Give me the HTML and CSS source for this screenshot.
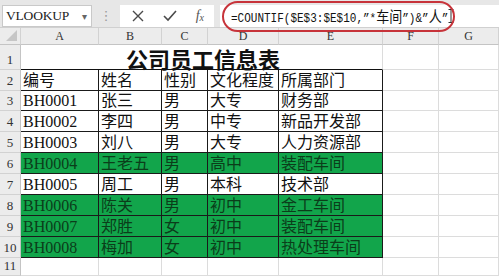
FILE: index.html
```html
<!DOCTYPE html>
<html lang="zh">
<head>
<meta charset="utf-8">
<link rel="stylesheet" href="styles.css">
</head>
<body>
<div class="app">
  <div class="fbar">
    <div class="namebox"><span class="name">VLOOKUP</span><span class="dd">▾</span></div>
    <div class="grip">⋮</div>
    <div class="btns">
      <svg class="ic" width="12" height="12" viewBox="0 0 12 12"><path d="M1 1 L11 11 M11 1 L1 11" stroke="#4a4a4a" stroke-width="1.4" fill="none"/></svg>
      <svg class="ic" width="14" height="12" viewBox="0 0 14 12"><path d="M1 6 L5 10 L13 1" stroke="#4a4a4a" stroke-width="1.6" fill="none"/></svg>
      <span class="fx">f<sub>x</sub></span>
    </div>
    <div class="formula"><span class="ftext">=COUNTIF($E$3:$E$10,”*<span class="cj">车间</span>”)&amp;”<span class="cj">人</span>”</span><svg class="ibeam" width="6" height="14" viewBox="0 0 6 14"><path d="M0.5 0.5 H5.5 M3 0.5 V13.5 M0.5 13.5 H5.5" stroke="#333" stroke-width="1" fill="none"/></svg></div>
    <div class="oval"></div>
  </div>
  <div class="sheet">
    <div class="ch corner"><span class="tri"></span></div>
    <div class="ch">A</div><div class="ch">B</div><div class="ch">C</div><div class="ch">D</div><div class="ch">E</div><div class="ch">F</div><div class="ch">G</div>

    <div class="rh">1</div>
    <div class="c title"><span>公司员工信息表</span></div>
    <div class="c"></div><div class="c"></div>

    <div class="rh">2</div>
    <div class="c t first">编号</div><div class="c t">姓名</div><div class="c t">性别</div><div class="c t">文化程度</div><div class="c t last">所属部门</div><div class="c"></div><div class="c"></div>

    <div class="rh">3</div>
    <div class="c t first">BH0001</div><div class="c t">张三</div><div class="c t">男</div><div class="c t">大专</div><div class="c t last">财务部</div><div class="c"></div><div class="c"></div>

    <div class="rh">4</div>
    <div class="c t first">BH0002</div><div class="c t">李四</div><div class="c t">男</div><div class="c t">中专</div><div class="c t last">新品开发部</div><div class="c"></div><div class="c"></div>

    <div class="rh">5</div>
    <div class="c t first">BH0003</div><div class="c t">刘八</div><div class="c t">男</div><div class="c t">大专</div><div class="c t last">人力资源部</div><div class="c"></div><div class="c"></div>

    <div class="rh">6</div>
    <div class="c t g first">BH0004</div><div class="c t g">王老五</div><div class="c t g">男</div><div class="c t g">高中</div><div class="c t g last">装配车间</div><div class="c"></div><div class="c"></div>

    <div class="rh">7</div>
    <div class="c t first">BH0005</div><div class="c t">周工</div><div class="c t">男</div><div class="c t">本科</div><div class="c t last">技术部</div><div class="c"></div><div class="c"></div>

    <div class="rh">8</div>
    <div class="c t g first">BH0006</div><div class="c t g">陈关</div><div class="c t g">男</div><div class="c t g">初中</div><div class="c t g last">金工车间</div><div class="c"></div><div class="c"></div>

    <div class="rh">9</div>
    <div class="c t g first">BH0007</div><div class="c t g">郑胜</div><div class="c t g">女</div><div class="c t g">初中</div><div class="c t g last">装配车间</div><div class="c"></div><div class="c"></div>

    <div class="rh">10</div>
    <div class="c t g first">BH0008</div><div class="c t g">梅加</div><div class="c t g">女</div><div class="c t g">初中</div><div class="c t g last">热处理车间</div><div class="c"></div><div class="c"></div>

    <div class="rh">11</div>
    <div class="c"></div><div class="c"></div><div class="c"></div><div class="c"></div><div class="c"></div><div class="c"></div><div class="c"></div>
  </div>
</div>
</body>
</html>
```
FILE: styles.css
```css
* { box-sizing: border-box; }
html, body { margin: 0; padding: 0; }
body { width: 499px; height: 276px; overflow: hidden; background: #fff; }
.app { width: 499px; height: 276px; display: flex; flex-direction: column; }

.fbar {
  position: relative;
  height: 33px;
  background: #e7e7e7;
  display: flex;
  align-items: flex-start;
  padding-top: 5px;
  border-bottom: 1px solid #d0d0d0;
}
.namebox {
  margin-left: 2px;
  width: 90px; height: 22px;
  background: #fff;
  border: 1px solid #c9c9c9;
  display: flex; align-items: center; justify-content: space-between;
  padding: 0 4px 0 3px;
}
.name { font-family: "Liberation Serif", serif; font-size: 13.5px; color: #222; letter-spacing: -0.2px; }
.dd { font-family: "DejaVu Sans", sans-serif; font-size: 10px; color: #666; }
.grip { width: 28px; text-align: center; font-family: "DejaVu Sans", sans-serif; font-size: 13px; line-height: 22px; color: #999; }
.btns {
  width: 94px; height: 22px;
  background: #fff;
  display: flex; align-items: center; justify-content: space-between;
  padding: 0 10px 0 12px;
}
.fx { font-family: "Liberation Serif", serif; font-style: italic; font-size: 14px; color: #555; }
.fx sub { font-size: 10px; vertical-align: -1px; }
.formula {
  margin-left: 6px;
  flex: 1; height: 22px;
  background: #fff;
  display: flex; align-items: center;
  padding-left: 11px;
}
.ftext { display: inline-block; font-family: "Liberation Mono", monospace; font-size: 11px; color: #111; transform: scaleY(1.15); white-space: nowrap; }
.cj { font-family: "Noto Sans CJK SC", sans-serif; font-size: 13px; line-height: 1; }
.ibeam { margin-left: 0; }
.oval {
  position: absolute;
  left: 222px; top: 1px;
  width: 233px; height: 31px;
  border: 2px solid #c7333a;
  border-radius: 16px;
}

.sheet {
  flex: 1;
  display: grid;
  grid-template-columns: 21px 78px 63px 46px 71px 104px 56px 1fr;
  grid-template-rows: 17px 25px 21px 20px 21px 21px 21px 21px 21px 21px 21px 1fr;
  font-family: "Liberation Serif", "Noto Sans CJK SC", serif;
}
.ch {
  background: #ececec;
  border-right: 1px solid #d2d2d2;
  border-bottom: 1px solid #c4c4c4;
  display: flex; align-items: center; justify-content: center;
  font-family: "Liberation Serif", serif; font-size: 12px; color: #333;
}
.corner { position: relative; }
.tri {
  position: absolute; right: 3px; bottom: 3px;
  width: 0; height: 0;
  border-left: 11px solid transparent;
  border-bottom: 11px solid #c6c6c6;
}
.rh {
  background: #ececec;
  border-right: 1px solid #c4c4c4;
  border-bottom: 1px solid #d2d2d2;
  display: flex; align-items: flex-end; justify-content: center;
  padding-bottom: 1px;
  font-family: "Liberation Serif", serif; font-size: 13px; color: #333;
}
.c {
  border-right: 1px solid #dcdcdc;
  border-bottom: 1px solid #dcdcdc;
  display: flex; align-items: flex-end;
  padding: 0 0 0 2px;
  white-space: nowrap;
  overflow: hidden;
}
.title {
  grid-column: 2 / 7;
  border-bottom: 1px solid #111;
  padding-left: 105px;
  align-items: flex-start;
  padding-top: 2px;
  font-family: "Noto Sans CJK SC", sans-serif;
  font-size: 22px; font-weight: 600; color: #111;
  line-height: 22px;
  overflow: visible;
}
.t {
  border-right: 1px solid #1a1a1a;
  border-bottom: 1px solid #1a1a1a;
  font-size: 16px; color: #111;
  line-height: 19px;
  font-family: "Liberation Serif", "Noto Sans CJK SC", serif;
}
.first { padding-left: 2px; }
.g { background: #12a54b; color: #0b3d1a; }
```
